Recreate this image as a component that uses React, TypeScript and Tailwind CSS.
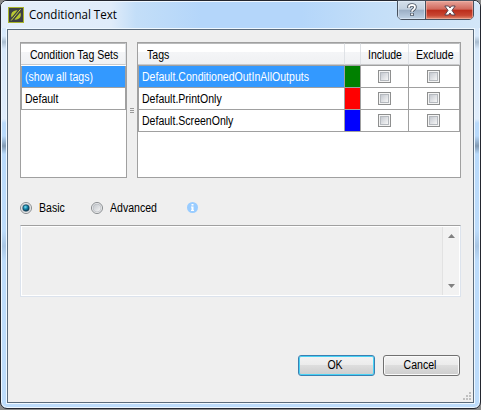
import React from "react";

const text = "block origin-left whitespace-nowrap scale-x-[.857] text-[12.3px] leading-[22px]";

function Header({ label = "", className = "" }: { label?: string; className?: string }) {
  return (
    <div className={`h-[22px] shrink-0 border-t border-r border-b border-t-[#b9babb] border-r-[#dfe2e6] border-b-[#c9cacc] bg-[linear-gradient(#fff_0%,#fff_40%,#f4f5f7_42%,#f0f1f3_100%)] ${className}`}>
      <span className={text}>{label}</span>
    </div>
  );
}

function Check() {
  return (
    <span className="block h-[13px] w-[13px] border border-[#8e8f8f] bg-[#f4f4f4] p-[1px]">
      <span className="block h-[9px] w-[9px] border border-[#b5b9be] bg-linear-to-br from-[#c5c9d0] to-[#f6f6f6]" />
    </span>
  );
}

function Row({ name, color, selected = false }: { name: string; color: string; selected?: boolean }) {
  return (
    <div className="flex h-[22px]">
      <div className={`w-[207px] border-r border-b border-l border-[#a0a0a0] pl-[3px] ${selected ? "bg-[#3399ff] text-white" : ""}`}>
        <span className={text}>{name}</span>
      </div>
      <div className={`w-[16px] border-r border-b border-[#a0a0a0] ${color}`} />
      <div className="w-[48px] border-r border-b border-[#a0a0a0] pt-[4px] pl-[17px]"><Check /></div>
      <div className="w-[51px] border-r border-b border-[#a0a0a0] pt-[4px] pl-[18px]"><Check /></div>
    </div>
  );
}

function Radio({ on = false }: { on?: boolean }) {
  return (
    <svg width="12" height="12" viewBox="0 0 12 12" className="shrink-0">
      <defs>
        <radialGradient id="dot" cx=".4" cy=".35" r=".7">
          <stop offset="0" stopColor="#7fe0f5" />
          <stop offset=".45" stopColor="#1687ad" />
          <stop offset="1" stopColor="#073047" />
        </radialGradient>
        <linearGradient id="ring" x2="1" y2="1">
          <stop offset="0" stopColor="#bfc3c9" />
          <stop offset="1" stopColor="#f8f8f8" />
        </linearGradient>
      </defs>
      <circle cx="6" cy="6" r="5.5" fill="#f7f7f7" stroke="#85898d" />
      <circle cx="6" cy="6" r="4" fill="url(#ring)" stroke="#b6bac0" strokeWidth=".7" />
      {on && <circle cx="6" cy="6" r="3.2" fill="url(#dot)" stroke="#133b50" strokeWidth=".6" />}
    </svg>
  );
}

export default function App() {
  return (
    <div className="h-[410px] w-[481px] overflow-hidden bg-[#8a8a8a] font-['Liberation_Sans',Arial,sans-serif] text-black">
      <div className="flex h-[409px] w-[481px] flex-col rounded-[7px] border border-[#23262f] bg-[linear-gradient(#cfe3f8_0px,#d8e9fb_35px,#a9bccf_41px,#d8e9fb_48px,#e0edfb_118px,#b9dafb_122px,#b9dafb_135px,#8099b2_145px,#b9dafb_153px,#bddcfb_230px,#a9c6e4_245px,#bddcfb_260px,#bddcfb_100%)] shadow-[inset_0_0_0_1px_#eef7ff]">
        <div className="flex h-[27px] shrink-0 rounded-t-[6px] bg-[linear-gradient(90deg,#e4eefa_0px,#e0ecfa_110px,#c3def8_135px,#b4d6fa_200px,#b4d6fa_300px,#c3def8_370px,#d3e6f8_100%)] pl-[7px] shadow-[inset_0_1px_0_#eff7ff]">
          <svg width="16" height="16" viewBox="0 0 16 16" className="mt-[6px] shrink-0">
            <rect x=".5" y=".5" width="15" height="15" fill="#3d4045" stroke="#a9b52a" />
            <path d="M3.6 10.5C2.2 7 4.2 3 9.6 3.2Z M6.4 12.6L12.3 5.4C14 9 11.5 13.2 6.4 12.6Z" fill="#b8c832" />
            <path d="M3.2 13.5L12.6 2.2" stroke="#c9d63a" strokeWidth="1" />
          </svg>
          <span className="mt-[4px] ml-[5px] w-[368px] origin-left scale-x-[.965] whitespace-nowrap font-['Open_Sans',sans-serif] text-[12px] leading-[20px]">Conditional Text</span>
          <div className="-mt-px flex h-[20px] w-[77px] shrink-0 overflow-hidden rounded-b-[5px] border border-[#47515e]">
            <div className="flex w-[28px] items-center justify-center border-r border-[#47515e] bg-[linear-gradient(#d5e0eb_0%,#c2d0df_46%,#9baec4_50%,#bfd2e5_100%)] shadow-[inset_0_0_0_1px_#e2edf7aa]">
              <svg width="10" height="14" viewBox="0 0 10 14">
                <path d="M2 5V3.7Q2 2 5 2T8 4Q8 5.4 6.5 6.5Q5 7.4 5 9M5 10V13" fill="none" stroke="#4e5866" strokeWidth="3.6" />
                <path d="M2 4.7V3.7Q2 2 5 2T8 4Q8 5.4 6.5 6.5Q5 7.4 5 8.8M5 10.4V12.3" fill="none" stroke="#fff" strokeWidth="1.8" />
              </svg>
            </div>
            <div className="flex flex-1 items-center justify-center bg-[linear-gradient(#e8a49a_0%,#d1685b_46%,#bb2c1a_50%,#c84632_80%,#e18b6f_100%)] shadow-[inset_0_0_0_1px_#f5b9ac99]">
              <svg width="12" height="11" viewBox="0 0 12 11">
                <path d="M.8 1H4.5L6 3L7.5 1H11.2L8 5.4L11.2 10H7.5L6 8L4.5 10H.8L4 5.4Z" fill="#fff" stroke="#594450" />
              </svg>
            </div>
          </div>
        </div>

        <main className="mx-[5px] mb-[4px] flex flex-1 flex-col border border-[#eff8ff]">
          <div className="flex flex-1 flex-col border border-[#5b6b7c] bg-[#efefef]">
            <div className="mt-[12px] ml-[12px] flex h-[136px]">
              <section className="w-[107px] border border-[#a0a0a0] bg-white">
                <Header label="Condition Tag Sets" className="pl-[9px]" />
                <div className="mt-px h-[22px] w-[105px] border-r border-b border-l border-[#a0a0a0] bg-[#3399ff] pl-[3px] text-white"><span className={text}>(show all tags)</span></div>
                <div className="h-[22px] w-[105px] border-r border-b border-l border-[#a0a0a0] pl-[3px]"><span className={text}>Default</span></div>
              </section>
              <div className="flex w-[10px] flex-col items-center gap-px pt-[66px]">
                <i className="h-px w-[4px] bg-[#999]" /><i className="h-px w-[4px] bg-[#999]" /><i className="h-px w-[4px] bg-[#999]" />
              </div>
              <section className="w-[324px] border border-[#a0a0a0] bg-white">
                <div className="flex">
                  <Header label="Tags" className="w-[207px] pl-[9px]" />
                  <Header className="w-[16px]" />
                  <Header label="Include" className="w-[48px] pl-[7px]" />
                  <Header label="Exclude" className="w-[51px] pl-[7px]" />
                </div>
                <div className="h-px bg-[#a0a0a0]" />
                <Row name="Default.ConditionedOutInAllOutputs" color="bg-[#008000]" selected />
                <Row name="Default.PrintOnly" color="bg-[#ff0000]" />
                <Row name="Default.ScreenOnly" color="bg-[#0000ff]" />
              </section>
            </div>

            <div className="mt-[20px] ml-[12px] flex h-[20px] items-center">
              <Radio on /><span className={`ml-[7px] w-[52px] ${text}`}>Basic</span>
              <Radio /><span className={`ml-[7px] w-[77px] ${text}`}>Advanced</span>
              <svg width="11" height="11" viewBox="0 0 11 11" className="-mt-px">
                <circle cx="5.5" cy="5.5" r="5.5" fill="#99ccff" />
                <path d="M4.5 2H6.5V3.5H4.5ZM4 4.5H6.5V8H7V9H4V8H4.5V5.5H4Z" fill="#fff" />
              </svg>
            </div>

            <div className="mt-[7px] ml-[12px] flex h-[72px] w-[441px] justify-end border border-t-[#a0a0a0] border-r-[#dce3ed] border-b-[#dce3ed] border-l-[#dce3ed]">
              <div className="flex flex-1 justify-end border border-white">
                <div className="flex w-[17px] flex-col items-center justify-between border-l border-[#e2e2e2] bg-[#f2f2f2] py-[7px]">
                  <svg width="7" height="4" viewBox="0 0 7 4"><path d="M0 4L3.5 0L7 4Z" fill="#808080" /></svg>
                  <svg width="7" height="4" viewBox="0 0 7 4"><path d="M0 0H7L3.5 4Z" fill="#808080" /></svg>
                </div>
              </div>
            </div>

            <div className="mt-[58px] ml-[290px] flex gap-[8px]">
              <button className="h-[21px] w-[77px] rounded-[3px] border border-[#3c7fb1] bg-[linear-gradient(#f3f3f3_0%,#ebebeb_48%,#dddddd_50%,#cdcdcd_100%)] pr-[3px] shadow-[inset_0_0_0_1px_#48d2f5]">
                <span className={`origin-center! ${text} leading-[19px]!`}>OK</span>
              </button>
              <button className="h-[21px] w-[77px] rounded-[3px] border border-[#707070] bg-[linear-gradient(#f3f3f3_0%,#ebebeb_48%,#dddddd_50%,#cdcdcd_100%)] pr-[3px] shadow-[inset_0_0_0_1px_#fafafa]">
                <span className={`origin-center! ${text} leading-[19px]!`}>Cancel</span>
              </button>
            </div>
            <div className="mt-auto flex justify-end pr-[2px] pb-[2px]">
              <svg width="8" height="8" viewBox="0 0 8 8" fill="#c0c0c0">
                <path d="M6 0h2v2h-2zM6 3h2v2h-2zM3 3h2v2h-2zM6 6h2v2h-2zM3 6h2v2h-2zM0 6h2v2h-2z" />
              </svg>
            </div>
          </div>
        </main>
      </div>
    </div>
  );
}
